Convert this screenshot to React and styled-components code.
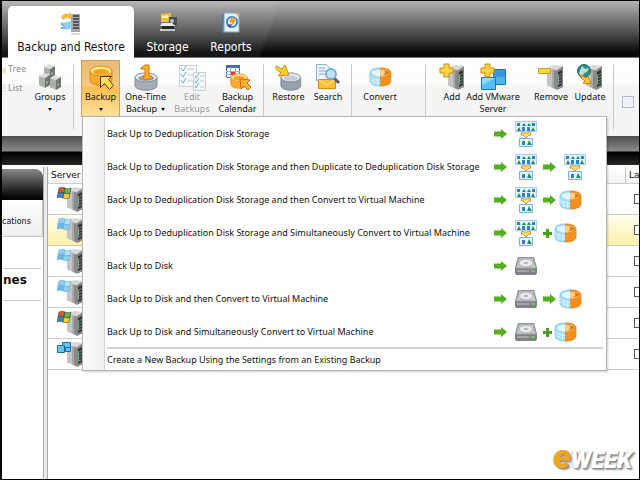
import React from 'react';
import styled, { createGlobalStyle, css } from 'styled-components';

const ui = '"Noto Sans", "Open Sans", sans-serif';
const wide = '"DejaVu Sans", Verdana, sans-serif';
const title = '"DejaVu Sans Condensed", "DejaVu Sans", sans-serif';

const GlobalStyle = createGlobalStyle`
  * { box-sizing: border-box; }
  body { margin: 0; background: #fff; color: #111; font: 9px/12px ${ui}; }
  button { font: inherit; color: inherit; background: none; border: 0; padding: 0; margin: 0; }
  svg { display: block; flex: none; }
`;

/* ---------- layout parts ---------- */

const Window = styled.div`
  position: relative;
  display: flex;
  flex-direction: column;
  min-height: 100vh;
  border: solid #000;
  border-width: 1px 1px 1px 2px;
  overflow: hidden;
`;

const TabBar = styled.header`
  display: flex;
  align-items: flex-end;
  height: 57px;
  padding-left: 6px;
  border-bottom: 1px solid #777;
  background:
    linear-gradient(110deg, rgba(255, 255, 255, 0.06) 259px, transparent 263px),
    linear-gradient(#b4b4b4, #858585 25%, #444643 62%, #070807 92%);
`;

const Tab = styled.button`
  display: flex;
  flex-direction: column;
  align-items: center;
  width: ${p => p.$width}px;
  height: 51px;
  padding-top: 6px;
  font: 12px/16px ${title};
  gap: 3px;
  color: #fff;
  ${p => p.$active && css`
    height: 52px;
    margin-bottom: -1px;
    color: #111;
    background: #fff;
    border-radius: 5px 5px 0 0;
  `}
`;

const Ribbon = styled.section`
  display: flex;
  align-items: flex-start;
  height: 78px;
  padding-top: 2px;
  background: linear-gradient(#fff 0, #fdfcfd 26px, #f6f5f6 27px, #f5f4f5);
`;

const Group = styled.div`
  display: flex;
  align-items: flex-start;
  padding: 0 ${p => p.$right || 0}px 0 ${p => p.$left || 0}px;
`;

const Divider = styled.div`
  flex: none;
  width: 1px;
  height: 65px;
  margin: 4px 4px 0;
  background: #c9c9c9;
`;

const ViewList = styled.div`
  display: flex;
  flex-direction: column;
  gap: 7px;
  width: 29px;
  padding-top: 3px;
`;

const ViewOption = styled.button`
  display: flex;
  align-items: center;
  height: 12px;
  gap: 1px;
  font: 9px/12px ${ui};
  color: #8c8c8c;
`;

const Slot = styled.div`
  position: relative;
  display: flex;
  justify-content: center;
  width: ${p => p.$width}px;
  margin-left: ${p => p.$before || 0}px;
`;

const ToolButton = styled.button`
  display: flex;
  flex-direction: column;
  align-items: center;
  min-width: 39px;
  height: 57px;
  padding-top: 2px;
  border: 1px solid ${p => (p.$active ? '#c9a05a' : 'transparent')};
  border-bottom: 0;
  background: ${p => (p.$active ? 'linear-gradient(#e9bb74, #f3cb83 45%, #fdbd4e 47%, #fed27a 75%, #fde29a)' : 'none')};
  color: ${p => (p.$muted ? '#9b9b9b' : '#111')};
  white-space: pre;
`;

const Caption = styled.span`
  display: flex;
  flex-direction: column;
  align-items: center;
`;

const CaptionLine = styled.span`
  display: flex;
  align-items: center;
  justify-content: center;
  gap: 4px;
  height: 12px;
`;

const Caret = styled.span`
  border: solid transparent;
  border-width: 3px 2px 0;
  border-top-color: #111;
`;

const RibbonCheck = styled.input`
  appearance: none;
  flex: none;
  width: 12px;
  height: 12px;
  margin: 36px 0 0 4px;
  border: 1px solid #b2bdd4;
  background: #eef1f7;
`;

const Band = styled.div`
  height: 29px;
  background: linear-gradient(#4d4d4d, #8a8a8a 15px, #000 16px, #111 22px, #292929);
`;

const Main = styled.main`
  display: flex;
  flex: 1;
`;

const Sidebar = styled.nav`
  width: 41px;
  flex: none;
  padding-top: 4px;
`;

const SideHeader = styled.div`
  height: 31px;
  border-radius: 0 8px 0 0;
  background: linear-gradient(#8a8a8a, #4c4c4c 40%, #050505 92%);
`;

const SideTab = styled.button`
  display: block;
  width: 100%;
  height: 37px;
  padding-top: 6px;
  border: 1px solid #c6c6b8;
  border-left: 0;
  border-top: 0;
  background: linear-gradient(#fdfdfd, #eeeeee);
  font: 8px/11px ${wide};
  text-align: left;
`;

const SideSection = styled.h2`
  margin: 31px 2px 0 0;
  padding: 3px 0 11px 1px;
  border: solid #c6c6c6;
  border-width: 1px 0;
  font: bold 12px/17px ${wide};
`;

const Splitter = styled.div`
  flex: none;
  width: 5px;
  margin-top: 2px;
  border: solid #aaa;
  border-width: 0 1px;
  background: #e9e9ee;
`;

const Listing = styled.div`
  flex: 1;
  min-width: 0;
  padding-top: 2px;
`;

const ServerTable = styled.table`
  width: 100%;
  table-layout: fixed;
  border-collapse: separate;
  border-spacing: 0;
`;

const HeadCell = styled.th`
  width: ${p => (p.$width ? `${p.$width}px` : 'auto')};
  height: 17px;
  padding: 0 0 0 3px;
  border-bottom: 1px solid #ccc;
  border-right: 1px solid #c9c9c9;
  background: linear-gradient(#fff, #f3f3f3);
  font: 9px/14px ${wide};
  text-align: left;
  overflow: hidden;
  &:last-child { border-right: 0; }
`;

const Row = styled.tr`
  background: ${p => (p.$selected ? 'linear-gradient(#fffdf0, #fdf0a6)' : '#fff')};
`;

const Cell = styled.td`
  height: 31px;
  padding: 0;
  border-bottom: 1px solid #ccc;
  overflow: hidden;
`;

const IconPad = styled.div`
  padding-left: 9px;
`;

const CheckPad = styled.div`
  display: flex;
  padding-left: 8px;
  overflow: hidden;
`;

const RowCheck = styled.input`
  appearance: none;
  flex: none;
  width: 10px;
  height: 10px;
  margin: 0;
  border: 1px solid #555;
  background: #fff;
`;

const Menu = styled.div`
  position: absolute;
  z-index: 2;
  top: 56px;
  left: 4px;
  display: flex;
  flex-direction: column;
  width: 525px;
  border: 1px solid #b5b5b5;
  background: linear-gradient(90deg, #fafafa, #f1f0f1 21px, #d3d3d3 21px, #d3d3d3 22px, #fff 22px);
  box-shadow: 1px 1px 2px rgba(0, 0, 0, 0.2);
`;

const MenuItem = styled.button`
  display: flex;
  align-items: center;
  height: ${p => (p.$short ? 21 : 33)}px;
  padding: 0 3px 0 24px;
  text-align: left;
  white-space: nowrap;
`;

const MenuLabel = styled.span`
  flex: 1;
`;

const Steps = styled.span`
  display: flex;
  align-items: center;
  gap: 2px;
  width: 109px;
`;

const Stage = styled.span`
  display: flex;
  justify-content: center;
  width: 31px;
`;

const MenuRule = styled.hr`
  align-self: stretch;
  height: 2px;
  margin: -1px 3px 0 24px;
  border: 0;
  background: #d3d3d3;
`;

const Brand = styled.div`
  position: absolute;
  right: 7px;
  bottom: 3px;
  display: flex;
  align-items: baseline;
  font: italic 900 24px/32px Roboto, sans-serif;
  color: #fff;
  text-shadow: 1px 1px 1px #888, -1px 0 1px #ccc, 2px 2px 2px #999;
`;

const BrandInitial = styled.span`
  color: #f0a41c;
  font-size: 33px;
`;

/* ---------- icons ---------- */

const Tower = () => (
  <g>
    <path d="M10 5 17 2l9 1-6 4z" fill="#d8d8d8" />
    <path d="M10 5l10 2v20l-10-5z" fill="#a9a9a9" />
    <path d="M10 5l5 1v18l-5-2z" fill="#c4c4c4" />
    <path d="M20 7l6-4v21l-6 3z" fill="#85868a" />
    <path d="M21 9l4-2v3l-4 2zM21 13l4-2v2l-4 2zM21 16l4-2v2l-4 2zM21 19l4-2v2l-4 2zM21 22l4-2v2l-4 2z" fill="#333" />
    <path d="M17 7l3 1v18l-3-1z" fill="#8a8a8c" />
    <path d="M21 12l1-.5v9l-1 .5z" fill="#5bbf63" />
  </g>
);

const Cross = () => (
  <path d="M6 1h5v4h4v5h-4v4H6v-4H2V5h4z" fill="#ffd545" stroke="#c88a12" />
);

const AddIcon = () => <svg width="28" height="28" viewBox="0 0 28 28"><Tower /><Cross /></svg>;

const RemoveIcon = () => (
  <svg width="28" height="28" viewBox="0 0 28 28"><Tower /><path d="M1.5 5.500h12v5h-12z" fill="#ffd545" stroke="#d39a20" /></svg>
);

const UpdateIcon = () => (
  <svg width="28" height="28" viewBox="0 0 28 28">
    <Tower />
    <circle cx="8" cy="8" r="6.500" fill="#2f8f87" stroke="#27635f" />
    <path d="M3 10l3-7 3 3 4-1-2 4-3 1-2 4z" fill="#bfe3d2" />
    <path d="M5 12l5 3 2-2 3 8-8-1 2-2-4-3z" fill="#ffc936" stroke="#d07c10" />
  </svg>
);

const VmIcon = () => (
  <svg width="28" height="28" viewBox="0 0 28 28">
    <path d="M14.500 6.500h12v15h-12z" fill="#379ad8" stroke="#1b75b0" />
    <path d="M2.500 14.500h14v12h-14z" fill="#58bdf0" stroke="#1b75b0" />
    <path d="M3 15h13L3 22z" fill="#94dcfb" />
    <path d="M17 14h9v7h-9z" fill="#4fb3ea" />
    <Cross />
  </svg>
);

const Cube = ({ x, y }) => (
  <g transform={`translate(${x} ${y})`}>
    <path d="M0 3l5-3 6 2-5 3z" fill="#dedede" />
    <path d="M0 3l6 2v10l-6-3z" fill="#adadad" />
    <path d="M6 5l5-3v10l-5 3z" fill="#747474" />
    <path d="M7 9l2-1v2l-2 1z" fill="#70cf62" />
  </g>
);

const GroupsIcon = () => (
  <svg width="28" height="28" viewBox="0 0 28 28"><Cube x={8} y={1} /><Cube x={3} y={10} /><Cube x={14} y={12} /></svg>
);

const Drum = ({ side, dark, top, inner }) => (
  <g>
    <path d="M1 6v9c0 7 22 7 22 0V6z" fill={side} stroke={dark} />
    <ellipse cx="12" cy="6" rx="11" ry="5" fill={top} stroke={dark} />
    <ellipse cx="12" cy="7" rx="8" ry="3" fill={inner} />
  </g>
);

const BackupIcon = () => (
  <svg width="28" height="28" viewBox="0 0 28 28">
    <g transform="translate(2 2)"><Drum side="#fbab22" dark="#e08a10" top="#ffe98a" inner="#f6a21a" /></g>
    <path d="M13.500 13.500h11l-3 3 5 6-4 4-5-6-4 4z" fill="#ffe04b" stroke="#4d3d12" />
  </svg>
);

const OneTimeIcon = () => (
  <svg width="28" height="28" viewBox="0 0 28 28">
    <g transform="translate(2 9) scale(1 .9)"><Drum side="#a5adb6" dark="#7f8890" top="#e3e8ec" inner="#9aa4ae" /></g>
    <path d="M9 5l4-3h4v11h3v3h-9v-3h2V6H9z" fill="#ffb52a" stroke="#e0680d" />
  </svg>
);

const EditIcon = () => (
  <svg width="28" height="28" viewBox="0 0 28 28">
    <path d="M1.500 2.500h17v21h-17z" fill="#f6f9fa" stroke="#c3d0d5" />
    <path d="M10 6h6M10 12h6M10 18h6" stroke="#c3ccd0" />
    <path d="M3 5l2 3 3-5M3 11l2 3 3-5M3 17l2 3 3-5" fill="none" stroke="#67b6de" />
    <path d="M15.500 9.500h12v18h-12z" fill="#f4f7f8" stroke="#c3d0d5" />
    <path d="M22 13h4M22 18h4M22 24h4" stroke="#c3ccd0" />
    <path d="M17 13l1 2 3-5M17 18l1 2 3-5M17 23l1 2 3-5" fill="none" stroke="#67b6de" />
  </svg>
);

const CalendarIcon = () => (
  <svg width="28" height="28" viewBox="0 0 28 28">
    <path d="M2.500 2.500h13v12h-13z" fill="#fff" stroke="#3f71ae" />
    <path d="M2 2h14v3H2z" fill="#3d6fb6" />
    <path d="M2 8.500h14M2 11.500h14M6.500 4v11M11.500 4v11" stroke="#8fb2da" />
    <path d="M7 9h4v3H7z" fill="#e23b2e" />
    <g transform="translate(6 10) scale(.75)"><Drum side="#fbaa2f" dark="#e3952a" top="#ffdf82" inner="#f6a02d" /></g>
    <path d="M16 16l10 1-3 3 4 4-3 3-4-4-3 3z" fill="#ffb12d" stroke="#d9600f" />
  </svg>
);

const RestoreIcon = () => (
  <svg width="28" height="28" viewBox="0 0 28 28">
    <g transform="translate(5 9) scale(.9)"><Drum side="#96a1ac" dark="#7c8994" top="#e3eaf0" inner="#c3d0dc" /></g>
    <path d="M1 3l6 3 3-4 4 10-11 1 3-3-5-4z" fill="#ffce35" stroke="#d78a12" />
  </svg>
);

const SearchIcon = () => (
  <svg width="28" height="28" viewBox="0 0 28 28">
    <path d="M2.500 1.500h10l4 4v12h-14z" fill="#eaf3fb" stroke="#90b0cf" />
    <path d="M5 5h6M5 8h8M5 11h7" stroke="#8dadd5" />
    <path d="M4.500 16.500h17v9h-17z" fill="#ffbd38" stroke="#d98a13" />
    <path d="M5 17l8 5 8-5" fill="none" stroke="#fff0b8" />
    <path d="M20 15l5 5" stroke="#5d5d5d" strokeWidth="3" />
    <circle cx="17" cy="11" r="5" fill="#bfe6f8" stroke="#7aaecb" strokeWidth="2" />
  </svg>
);

const SplitDrumShape = () => (
  <g>
    <path d="M1 6v9c0 3 5 5 11 5V1C6 1 1 3 1 6z" fill="#a5daf4" stroke="#8ccbea" />
    <path d="M12 1c6 0 11 2 11 5v9c0 3-5 5-11 5z" fill="#f58f1c" stroke="#e28722" />
    <path d="M12 3c-5 0-9 1-9 3s4 4 9 4z" fill="#e3f7ff" />
    <path d="M12 3c5 0 9 1 9 3s-4 4-9 4z" fill="#ffcf8f" />
    <path d="M14 9c5-1 7-2 7-3s-2-2-5-2c2 2 1 4-2 5z" fill="#e0770d" />
    <path d="M1 10c3 3 7 4 11 4M1 13c3 3 7 4 11 4" fill="none" stroke="#dff4fd" />
    <path d="M5 11v7M9 12v7" stroke="#dff4fd" />
  </g>
);

const SplitDrum = () => (
  <svg width="23" height="20" viewBox="0 0 24 21"><SplitDrumShape /></svg>
);

const ConvertIcon = () => (
  <svg width="28" height="28" viewBox="0 0 28 28"><g transform="translate(3 4) scale(.95)"><SplitDrumShape /></g></svg>
);

const ArrowIcon = () => (
  <svg width="14" height="10" viewBox="0 0 14 10"><path d="M0 2.500h7V0l6 5-6 5V7.500H0z" fill="#51b01b" /></svg>
);

const PlusIcon = () => (
  <svg width="9" height="10" viewBox="0 0 9 10"><path d="M3 1h3v3h3v3H6v3H3V7H0V4h3z" fill="#45a318" /></svg>
);

const DedupIcon = () => (
  <svg width="22" height="26" viewBox="0 0 22 26">
    <path d="M.5.500h21v10H.500z" fill="#e4f2fb" stroke="#a5cbe8" />
    <path d="M2 2h3v3H2zM7 6h3v4H7zM12 6h3v4h-3zM17 2h3v3h-3z" fill="#2287cf" />
    <path d="M9 2l2 3H7zM14 2l2 3h-4zM4 6l2 4H2zM18 6l2 4h-4z" fill="#258a6a" />
    <path d="M7 11l2 1h4l2-1 1 3h-2l-3 3-3-3H6z" fill="#ffe67e" stroke="#de8a34" />
    <path d="M4.500 17.500h13v8h-13z" fill="#eef8ff" stroke="#72b2df" />
    <path d="M7 20h3v4H7z" fill="#2287cf" />
    <path d="M14 19l3 5h-5z" fill="#258a6a" />
  </svg>
);

const DiskIcon = () => (
  <svg width="24" height="18" viewBox="0 0 24 18">
    <path d="M4 0h16l3 11v5l-1 2H2l-1-2v-5z" fill="#808287" />
    <path d="M5 1h14l3 10H2z" fill="#c6c8ca" stroke="#a2a4a7" />
    <ellipse cx="12" cy="6" rx="7" ry="4" fill="#e6e7e8" stroke="#aeb0b3" />
    <ellipse cx="12" cy="6" rx="2" ry="1" fill="#a9acb0" />
    <path d="M3 13h12v2H3z" fill="#a3a5a8" />
    <path d="M17 13h4v2h-4z" fill="#5fd05c" />
  </svg>
);

const RestoreTabIcon = () => (
  <svg width="22" height="24" viewBox="0 0 22 24">
    <path d="M11 2h9v18h-9z" fill="#a6a8ab" />
    <path d="M13 4h6M13 7h6M13 10h6M13 13h6M13 16h6" stroke="#55575a" strokeWidth="2" />
    <path d="M11 21h9v2h-9z" fill="#ddd" />
    <path d="M1 6c1-4 5-5 8-4V0l4 4-4 4V6C6 5 5 6 4 8z" fill="#f7b53d" />
    <path d="M1 17h7v-3L1 10v3l3 2H1z" fill="#66bce4" />
    <path d="M3 11l8-2 1 7-6 2z" fill="#8dd0ed" />
  </svg>
);

const StorageIcon = () => (
  <svg width="22" height="24" viewBox="0 0 22 24">
    <path d="M4 2l10-1v7l-3 2H4z" fill="#f5bd42" />
    <path d="M5 4l6-1v3H5z" fill="#fff1bd" />
    <path d="M12 5h8v8h-8z" fill="#4b4e50" />
    <circle cx="15" cy="9" r="2" fill="#b9c3c8" />
    <path d="M5 11h10l3 3H3z" fill="#ecebe8" />
    <path d="M5 14h12v3H5z" fill="#25282a" />
    <path d="M3 17h15v2H3z" fill="#c7c8ca" />
  </svg>
);

const ReportsIcon = () => (
  <svg width="22" height="24" viewBox="0 0 22 24">
    <path d="M2 2h3v19H2z" fill="#397cbd" />
    <path d="M4 1h15v19H4z" fill="#e8f0f7" stroke="#79a7d2" />
    <path d="M15 1h4v4z" fill="#f4a52a" />
    <circle cx="12" cy="10" r="5" fill="none" stroke="#3a83c7" strokeWidth="2" />
    <path d="M9 9l3-4 4 2-3 6" fill="#f5a52d" />
    <path d="M7 13l5-1-2 4z" fill="#275f9a" />
  </svg>
);

const flagColors = {
  color: { edge: '#34423e', panes: ['#e5532d', '#68b83e', '#3b84d1', '#f4ce38'] },
  blue: { edge: '#6aa9d1', panes: ['#8ed1f2', '#b5e2f7', '#68b9e8', '#8dcff0'] },
};

const Flag = ({ edge, panes }) => (
  <g stroke={edge} strokeWidth=".6">
    <path d="M2 3c2-1 4-1 6 0L7 8C5 7 3 7 1 8z" fill={panes[0]} />
    <path d="M8 3c2 1 4 1 6 0l-1 5c-2 1-4 1-6 0z" fill={panes[1]} />
    <path d="M1 8c2-1 4-1 6 0l-1 5c-2-1-4-1-6 0z" fill={panes[2]} />
    <path d="M7 8c2 1 4 1 6 0l-1 5c-2 1-4 1-6 0z" fill={panes[3]} />
  </g>
);

const ServerRowIcon = ({ badge }) => (
  <svg width="30" height="28" viewBox="0 0 30 28">
    <Tower />
    {badge === 'vm' ? (
      <g fill="#68c2f1" stroke="#176da8">
        <path d="M5.500 2.500h8v7h-8z" />
        <path d="M.5 5.500h7v7h-7zM8.500 7.500h5v4h-5z" />
      </g>
    ) : <Flag {...flagColors[badge]} />}
  </svg>
);

const TreeGlyph = () => <svg width="5" height="10" viewBox="0 0 5 10"><path d="M1 4h3v5H0V6z" fill="#f8dfad" /></svg>;
const ListGlyph = () => <svg width="5" height="10" viewBox="0 0 5 10"><path d="M0 2h4M0 5h4M0 8h4" stroke="#ddd" /></svg>;

/* ---------- composed parts ---------- */

function Tool({ icon, lines, width, before, caret, active, muted, children }) {
  return (
    <Slot $width={width} $before={before}>
      <ToolButton type="button" $active={active} $muted={muted} aria-expanded={active}>
        {icon}
        <Caption>
          {lines.map((line, i) => (
            <CaptionLine key={line}>
              {line}
              {caret === 'inline' && i === lines.length - 1 && <Caret />}
            </CaptionLine>
          ))}
          {caret === 'below' && <CaptionLine><Caret /></CaptionLine>}
        </Caption>
      </ToolButton>
      {children}
    </Slot>
  );
}

const backupChoices = [
  ['Back Up to Deduplication Disk Storage', ['arrow', 'dedup']],
  ['Back Up to Deduplication Disk Storage and then Duplicate to Deduplication Disk Storage', ['arrow', 'dedup', 'arrow', 'dedup']],
  ['Back Up to Deduplication Disk Storage and then Convert to Virtual Machine', ['arrow', 'dedup', 'arrow', 'drum']],
  ['Back Up to Deduplication Disk Storage and Simultaneously Convert to Virtual Machine', ['arrow', 'dedup', 'plus', 'drum']],
  ['Back Up to Disk', ['arrow', 'disk']],
  ['Back Up to Disk and then Convert to Virtual Machine', ['arrow', 'disk', 'arrow', 'drum']],
  ['Back Up to Disk and Simultaneously Convert to Virtual Machine', ['arrow', 'disk', 'plus', 'drum']],
];

const stepIcons = {
  arrow: <ArrowIcon />,
  plus: <PlusIcon />,
  dedup: <Stage><DedupIcon /></Stage>,
  disk: <Stage><DiskIcon /></Stage>,
  drum: <SplitDrum />,
};

function BackupMenu() {
  return (
    <Menu role="menu">
      {backupChoices.map(([label, steps]) => (
        <MenuItem key={label} type="button" role="menuitem">
          <MenuLabel>{label}</MenuLabel>
          <Steps>
            {steps.map((step, i) => <React.Fragment key={i}>{stepIcons[step]}</React.Fragment>)}
          </Steps>
        </MenuItem>
      ))}
      <MenuRule />
      <MenuItem type="button" role="menuitem" $short>
        <MenuLabel>Create a New Backup Using the Settings from an Existing Backup</MenuLabel>
      </MenuItem>
    </Menu>
  );
}

const servers = ['color', 'blue', 'blue', 'blue', 'color', 'vm'];

export default function App() {
  return (
    <Window>
      <GlobalStyle />
      <TabBar>
        <Tab type="button" $width={126} $active><RestoreTabIcon />Backup and Restore</Tab>
        <Tab type="button" $width={67}><StorageIcon />Storage</Tab>
        <Tab type="button" $width={60}><ReportsIcon />Reports</Tab>
      </TabBar>
      <Ribbon>
        <ViewList>
          <ViewOption type="button"><TreeGlyph />Tree</ViewOption>
          <ViewOption type="button"><ListGlyph />List</ViewOption>
        </ViewList>
        <Group>
          <Tool icon={<GroupsIcon />} lines={['Groups']} width={38} caret="below" />
        </Group>
        <Divider />
        <Group>
          <Tool icon={<BackupIcon />} lines={['Backup']} width={45} caret="below" active>
            <BackupMenu />
          </Tool>
          <Tool icon={<OneTimeIcon />} lines={['One-Time', 'Backup']} width={45} caret="inline" />
          <Tool icon={<EditIcon />} lines={['Edit', 'Backups']} width={48} muted />
          <Tool icon={<CalendarIcon />} lines={['Backup', 'Calendar']} width={43} />
        </Group>
        <Divider />
        <Group>
          <Tool icon={<RestoreIcon />} lines={['Restore']} width={41} />
          <Tool icon={<SearchIcon />} lines={['Search']} width={38} />
        </Group>
        <Divider />
        <Group $right={17}>
          <Tool icon={<ConvertIcon />} lines={['Convert']} width={48} caret="below" />
        </Group>
        <Divider />
        <Group $left={10} $right={3}>
          <Tool icon={<AddIcon />} lines={['Add']} width={24} />
          <Tool icon={<VmIcon />} lines={['Add VMware', 'Server']} width={58} />
          <Tool icon={<RemoveIcon />} lines={['Remove']} width={46} before={6} />
          <Tool icon={<UpdateIcon />} lines={['Update']} width={32} />
        </Group>
        <Divider />
        <RibbonCheck type="checkbox" aria-label="Show option" />
      </Ribbon>
      <Band />
      <Main>
        <Sidebar>
          <SideHeader />
          <SideTab type="button">cations</SideTab>
          <SideSection>nes</SideSection>
        </Sidebar>
        <Splitter />
        <Listing>
          <ServerTable>
            <thead>
              <tr>
                <HeadCell $width={60}>Server</HeadCell>
                <HeadCell />
                <HeadCell $width={13}>La</HeadCell>
              </tr>
            </thead>
            <tbody>
              {servers.map((badge, i) => (
                <Row key={i} $selected={i === 1}>
                  <Cell><IconPad><ServerRowIcon badge={badge} /></IconPad></Cell>
                  <Cell />
                  <Cell><CheckPad><RowCheck type="checkbox" aria-label={`Select server ${i + 1}`} /></CheckPad></Cell>
                </Row>
              ))}
            </tbody>
          </ServerTable>
        </Listing>
      </Main>
      <Brand><BrandInitial>e</BrandInitial>WEEK</Brand>
    </Window>
  );
}
